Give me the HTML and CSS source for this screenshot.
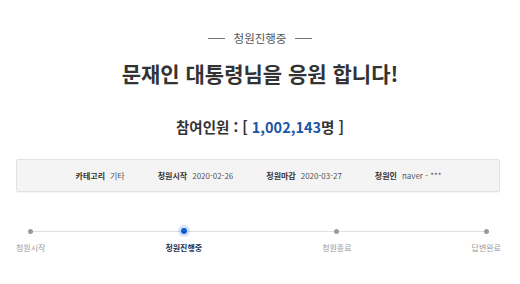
FILE: index.html
```html
<!DOCTYPE html>
<html lang="ko">
<head>
<meta charset="utf-8">
<link rel="stylesheet" href="styles.css">
</head>
<body>
<div class="page">
  <div class="status"><span class="dash"></span><span class="status-text">청원진행중</span><span class="dash"></span></div>
  <h1 class="title">문재인 대통령님을 응원 합니다!</h1>
  <div class="count">참여인원 : [ <span class="num">1,002,143</span>명 ]</div>
  <div class="info">
    <div class="item"><span class="label">카테고리</span><span class="value">기타</span></div>
    <div class="item"><span class="label">청원시작</span><span class="value">2020-02-26</span></div>
    <div class="item"><span class="label">청원마감</span><span class="value">2020-03-27</span></div>
    <div class="item"><span class="label">청원인</span><span class="value">naver - ***</span></div>
  </div>
  <div class="steps">
    <div class="step"><span class="dot"></span><span class="step-label">청원시작</span></div>
    <div class="step active"><span class="dot"></span><span class="step-label">청원진행중</span></div>
    <div class="step"><span class="dot"></span><span class="step-label">청원종료</span></div>
    <div class="step"><span class="dot"></span><span class="step-label">답변완료</span></div>
  </div>
</div>
</body>
</html>
```
FILE: styles.css
```css
* { box-sizing: border-box; }
html, body { margin: 0; padding: 0; background: #fff; }
body {
  width: 520px;
  height: 284px;
  overflow: hidden;
  font-family: "Noto Sans CJK KR", "Noto Sans", sans-serif;
  color: #333;
}
.page { display: flex; flex-direction: column; }
.status {
  padding-top: 30px;
  display: flex;
  justify-content: center;
  align-items: center;
  gap: 9px;
  line-height: 16px;
  font-size: 11.5px;
  color: #555;
}
.dash { width: 17px; height: 1px; background: #777; }
.title {
  margin: 12px 0 0;
  text-align: center;
  font-size: 21px;
  line-height: 30px;
  font-weight: 700;
  color: #333;
}
.count {
  margin-top: 29px;
  text-align: center;
  font-size: 14.5px;
  line-height: 20px;
  font-weight: 700;
  color: #333;
}
.num { color: #1c56a6; }
.info {
  margin: 22px 20px 0 16px;
  height: 33px;
  background: #f4f4f4;
  border: 1px solid #e2e2e2;
  border-radius: 2px;
  box-shadow: 0 1px 1px rgba(0,0,0,0.04);
  display: flex;
  justify-content: center;
  align-items: center;
  gap: 33px;
  padding-left: 1px;
  font-size: 8px;
}
.item { display: flex; gap: 5px; align-items: baseline; }
.label { font-weight: 700; color: #333; }
.value { color: #555; }
.steps {
  position: relative;
  margin: 33px 19px 0 16px;
  display: flex;
  justify-content: space-between;
}
.steps::before {
  content: "";
  position: absolute;
  left: 15px;
  right: 16px;
  top: 6px;
  height: 1px;
  background: #e0e0e0;
}
.step {
  position: relative;
  display: flex;
  flex-direction: column;
  align-items: center;
  gap: 5px;
}
.dot {
  width: 12px;
  height: 12px;
  display: flex;
  align-items: center;
  justify-content: center;
}
.dot::after {
  content: "";
  width: 5px;
  height: 5px;
  border-radius: 50%;
  background: #9a9a9a;
}
.active .dot {
  border-radius: 50%;
  background: rgba(40, 110, 220, 0.18);
}
.active .dot::after {
  width: 6px;
  height: 6px;
  background: #0b5fcf;
}
.step-label {
  font-size: 8px;
  line-height: 12px;
  color: #9a9a9a;
}
.active .step-label { color: #1d2f55; font-weight: 700; }
```
